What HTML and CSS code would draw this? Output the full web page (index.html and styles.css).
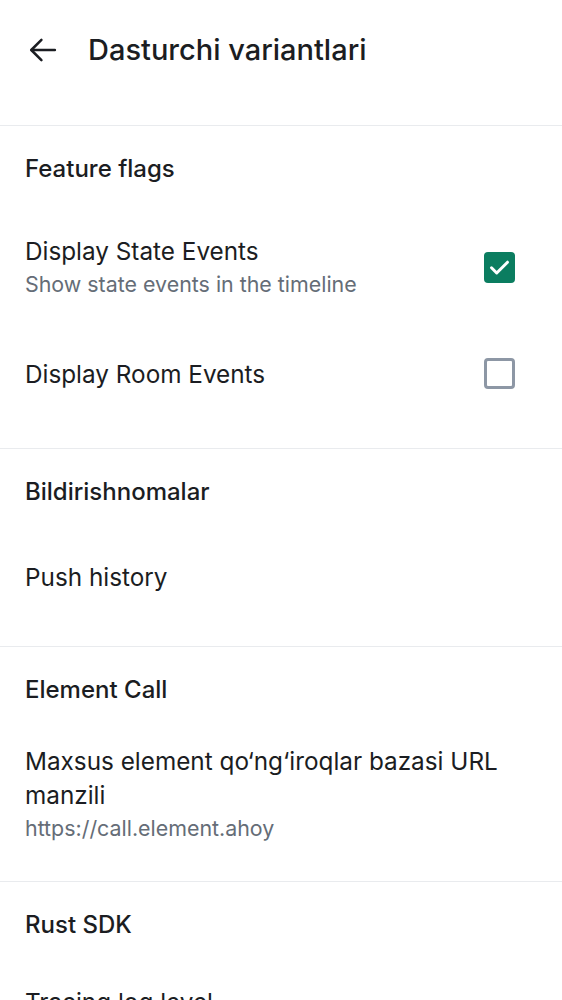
FILE: index.html
```html
<!DOCTYPE html>
<html lang="uz">
<head>
<meta charset="utf-8">
<title>Dasturchi variantlari</title>
<link rel="stylesheet" href="styles.css">
</head>
<body>
<div class="screen">
  <header class="topbar">
    <button class="back" aria-label="Orqaga">
      <svg width="38" height="38" viewBox="0 0 24 24" fill="none" stroke="#1b1d22" stroke-width="1.6" stroke-linecap="round" stroke-linejoin="round">
        <path d="M19.5 12H4.8"/>
        <path d="M11 5.6 4.6 12l6.4 6.4"/>
      </svg>
    </button>
    <h1 class="title">Dasturchi variantlari</h1>
  </header>

  <section class="section">
    <h2 class="section-title">Feature flags</h2>
    <div class="item two-line">
      <div class="texts">
        <div class="primary">Display State Events</div>
        <div class="secondary">Show state events in the timeline</div>
      </div>
      <div class="trail">
        <span class="checkbox checked">
          <svg width="31" height="31" viewBox="0 0 31 31" fill="none" stroke="#fff" stroke-width="3" stroke-linecap="round" stroke-linejoin="round"><path d="M7.5 15.8l5.2 5.2 10.8-10.8"/></svg>
        </span>
      </div>
    </div>
    <div class="item">
      <div class="texts">
        <div class="primary">Display Room Events</div>
      </div>
      <div class="trail">
        <span class="checkbox"></span>
      </div>
    </div>
  </section>

  <section class="section">
    <h2 class="section-title">Bildirishnomalar</h2>
    <div class="item">
      <div class="texts">
        <div class="primary">Push history</div>
      </div>
    </div>
  </section>

  <section class="section">
    <h2 class="section-title">Element Call</h2>
    <div class="item tall">
      <div class="texts">
        <div class="primary">Maxsus element qo‘ng‘iroqlar bazasi URL manzili</div>
        <div class="secondary">https://call.element.ahoy</div>
      </div>
    </div>
  </section>

  <section class="section">
    <h2 class="section-title">Rust SDK</h2>
    <div class="item tall last">
      <div class="texts">
        <div class="primary">Tracing log level</div>
      </div>
    </div>
  </section>
</div>
</body>
</html>
```

FILE: styles.css
```css
html, body {
  margin: 0;
  padding: 0;
  background: #ffffff;
}

body {
  font-family: Inter, Roboto, "Noto Sans", sans-serif;
  color: #1b1d22;
  overflow: hidden;
}

.screen {
  width: 562px;
  height: 1000px;
  overflow: hidden;
}

.topbar {
  height: 100px;
  display: flex;
  align-items: center;
  padding-left: 24px;
  margin-bottom: 25px;
}

.back {
  width: 38px;
  height: 38px;
  padding: 0;
  margin: 0;
  border: 0;
  background: none;
  display: flex;
  align-items: center;
  justify-content: center;
}

.title {
  margin: 0 0 0 26px;
  font-family: Inter, "Noto Sans", sans-serif;
  font-weight: 500;
  font-size: 29px;
  line-height: 36px;
  color: #1b1d22;
}

.section {
  border-top: 1px solid #e9ebee;
  padding-bottom: 25px;
}

.section-title {
  margin: 0;
  height: 84px;
  display: flex;
  align-items: center;
  padding: 0 25px;
  font-family: Inter, "Noto Sans", sans-serif;
  font-weight: 500;
  font-size: 24px;
  color: #1b1d22;
}

.item {
  display: flex;
  align-items: center;
  min-height: 88px;
  padding: 12px 25px;
  box-sizing: border-box;
}

.item.two-line {
  min-height: 114px;
}

.item.tall {
  min-height: 0;
  padding: 13px 25px 12px;
}

.item.last {
  padding-top: 19px;
}

.texts {
  flex: 1;
  min-width: 0;
}

.primary {
  font-size: 24.3px;
  line-height: 34px;
  color: #1b1d22;
}

.secondary {
  font-size: 21.4px;
  line-height: 32px;
  color: #656d77;
}

.trail {
  width: 75px;
  height: 75px;
  display: flex;
  align-items: center;
  justify-content: center;
  margin-right: -22px;
}

.checkbox {
  width: 31px;
  height: 31px;
  box-sizing: border-box;
  border: 3px solid #8d97a5;
  border-radius: 4px;
  display: block;
  margin-right: 44px;
}

.checkbox.checked {
  border: 0;
  background: #0b7d60;
}

.checkbox svg {
  display: block;
}
```
